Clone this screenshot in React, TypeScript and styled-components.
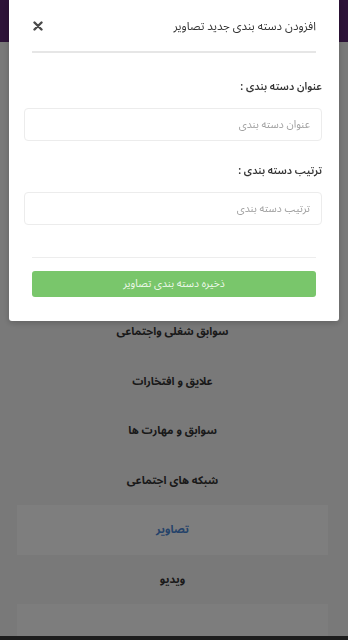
import styled, { createGlobalStyle } from 'styled-components';

const GlobalStyle = createGlobalStyle`
  html, body {
    margin: 0;
    padding: 0;
    height: 100%;
    overflow: hidden;
  }
  body {
    font-family: "Noto Sans Arabic", "DejaVu Sans", "Noto Sans", sans-serif;
    direction: rtl;
    background: #f3f3f3;
  }
`;

const Page = styled.div`
  display: flex;
  flex-direction: column;
  height: 100vh;
  background: #f3f3f3;
`;

const TopBar = styled.header`
  height: 42px;
  flex-shrink: 0;
  background: #5a2670;
`;

const Main = styled.main`
  flex: 1;
  overflow: hidden;
  display: flex;
  flex-direction: column;
  padding: 265px 20px 0 17px;
`;

const MenuList = styled.ul`
  list-style: none;
  margin: 0;
  padding: 0;
`;

const MenuItem = styled.li<{ $active?: boolean }>`
  height: 49.5px;
  display: flex;
  align-items: center;
  justify-content: center;
  font-size: 11px;
  font-weight: bold;
  color: ${(p) => (p.$active ? '#4a86d4' : '#333')};
  background: ${(p) => (p.$active ? '#fdfdfd' : 'transparent')};
`;

const MenuRest = styled.div`
  flex: 1;
  background: #fbfbfb;
`;

const BottomBar = styled.footer`
  height: 4px;
  flex-shrink: 0;
  background: #3a3a3a;
`;

const Overlay = styled.div`
  position: fixed;
  inset: 0;
  background: rgba(0, 0, 0, 0.5);
`;

const Modal = styled.div`
  position: fixed;
  top: 0;
  left: 9px;
  width: 330px;
  height: 321px;
  background: #fff;
  border-radius: 0 0 3px 3px;
  box-shadow: 0 2px 6px rgba(0, 0, 0, 0.2);
  display: flex;
  flex-direction: column;
`;

const ModalHeader = styled.div`
  margin: 0 23px;
  height: 53px;
  display: flex;
  align-items: center;
  justify-content: space-between;
  border-bottom: 2px solid #e6e6e6;
  box-sizing: border-box;
`;

const ModalTitle = styled.h4`
  margin: 0;
  font-size: 11.5px;
  font-weight: normal;
  color: #333;
`;

const CloseButton = styled.button`
  border: 0;
  background: none;
  padding: 0;
  margin-left: 1px;
  display: flex;
  cursor: pointer;
`;

const ModalBody = styled.div`
  padding: 26px 17px 0 15px;
  display: flex;
  flex-direction: column;
`;

const Field = styled.div`
  display: flex;
  flex-direction: column;
  margin-bottom: 22px;
`;

const Label = styled.label`
  font-size: 10.5px;
  font-weight: 600;
  color: #333;
  line-height: 16px;
  margin-bottom: 13px;
`;

const Input = styled.input`
  height: 33px;
  box-sizing: border-box;
  border: 1px solid #ececec;
  border-radius: 4px;
  padding: 0 11px;
  font-family: inherit;
  font-size: 10.5px;
  color: #333;
  direction: rtl;
  &::placeholder {
    color: #a0a0a0;
  }
`;

const ModalFooter = styled.div`
  margin: 10px 23px 0;
  padding-top: 13px;
  border-top: 1px solid #ededed;
`;

const SaveButton = styled.button`
  display: block;
  width: 100%;
  height: 26px;
  border: 0;
  border-radius: 3px;
  background: #79c66b;
  color: #eef8ea;
  font-family: inherit;
  font-size: 10.5px;
  line-height: 26px;
  padding: 0;
`;

const menu = ['سوابق شغلی واجتماعی', 'علایق و افتخارات', 'سوابق و مهارت ها', 'شبکه های اجتماعی', 'تصاویر', 'ویدیو'];

const CloseIcon = () => (
  <svg width="10" height="10" viewBox="0 0 10 10">
    <path d="M1.5 1.5 L8.5 8.5 M8.5 1.5 L1.5 8.5" stroke="#4a4a4a" strokeWidth="2.4" strokeLinecap="round" />
  </svg>
);

const App = () => {
  return (
    <>
      <GlobalStyle />
      <Page>
        <TopBar />
        <Main>
          <MenuList>
            {menu.map((item) => (
              <MenuItem key={item} $active={item === 'تصاویر'}>
                {item}
              </MenuItem>
            ))}
          </MenuList>
          <MenuRest />
        </Main>
        <BottomBar />
      </Page>
      <Overlay />
      <Modal>
        <ModalHeader>
          <ModalTitle>افزودن دسته بندی جدید تصاویر</ModalTitle>
          <CloseButton aria-label="بستن">
            <CloseIcon />
          </CloseButton>
        </ModalHeader>
        <ModalBody>
          <Field>
            <Label>عنوان دسته بندی :</Label>
            <Input placeholder="عنوان دسته بندی" />
          </Field>
          <Field>
            <Label>ترتیب دسته بندی :</Label>
            <Input placeholder="ترتیب دسته بندی" />
          </Field>
        </ModalBody>
        <ModalFooter>
          <SaveButton>ذخیره دسته بندی تصاویر</SaveButton>
        </ModalFooter>
      </Modal>
    </>
  );
};

export default App;
